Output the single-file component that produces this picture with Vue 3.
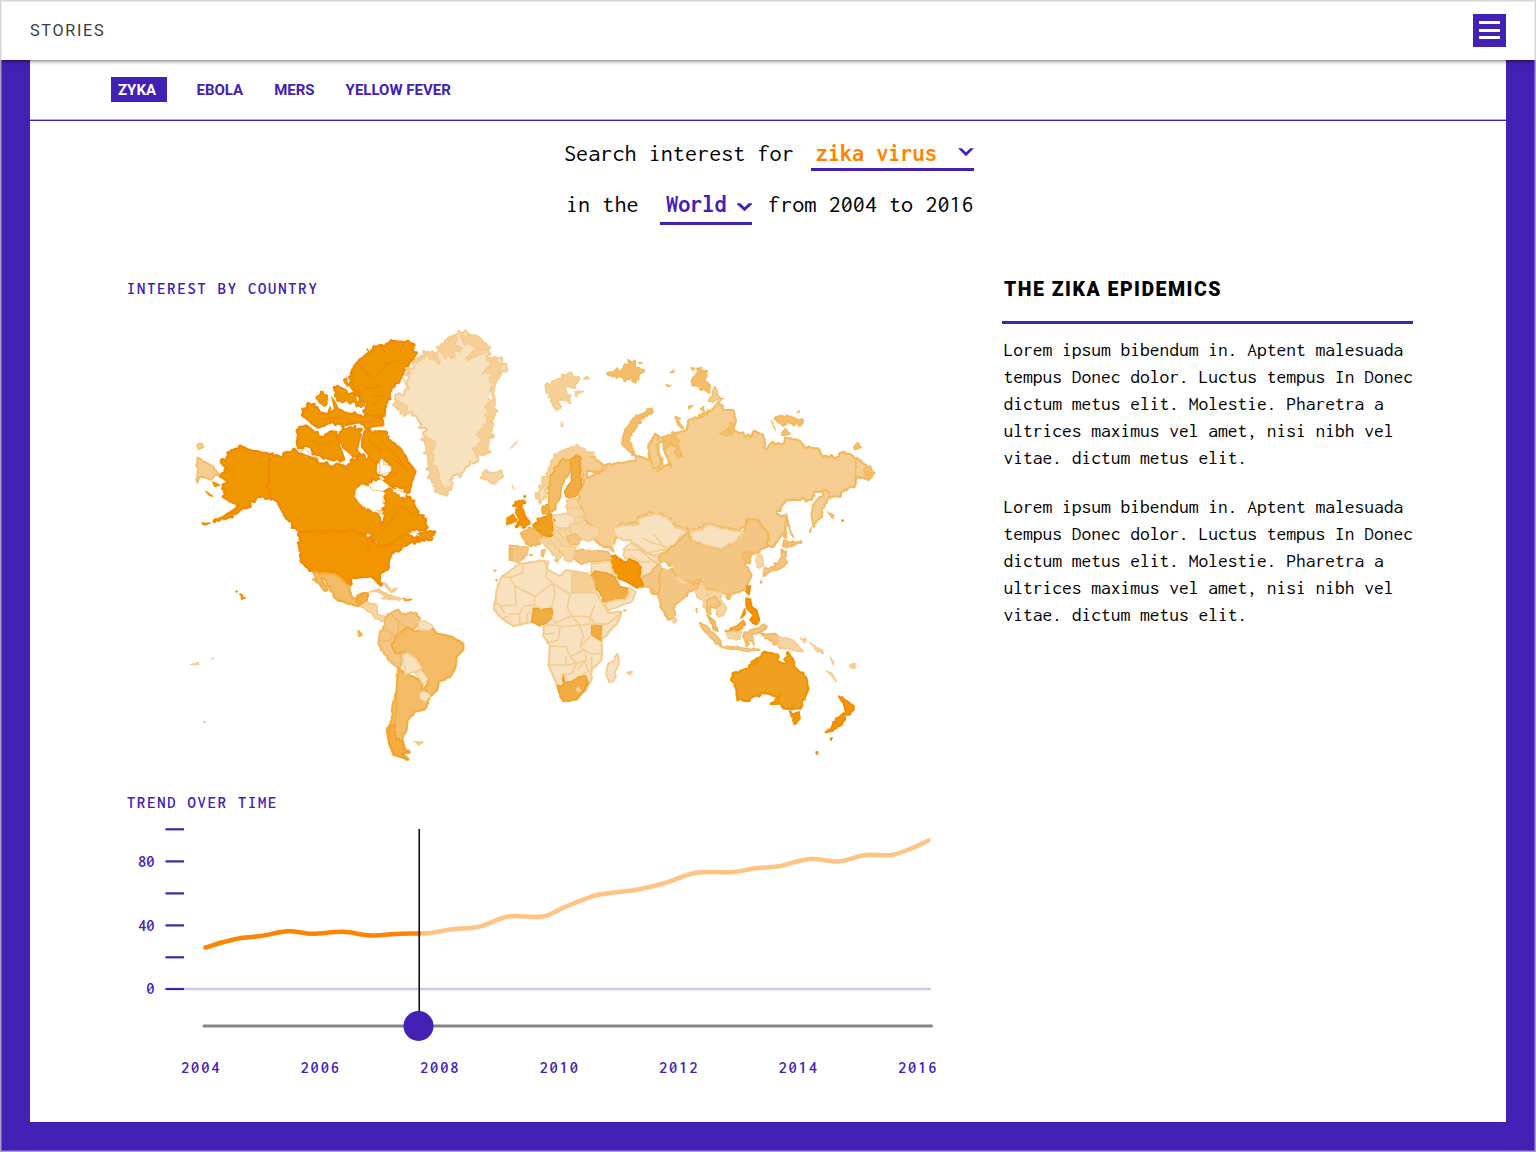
<script setup>
const topics = ['ZYKA', 'EBOLA', 'MERS', 'YELLOW FEVER']

const story = [
  'Lorem ipsum bibendum in. Aptent malesuada',
  'tempus Donec dolor. Luctus tempus In Donec',
  'dictum metus elit. Molestie. Pharetra a',
  'ultrices maximus vel amet, nisi nibh vel',
  'vitae. dictum metus elit.',
]

// Interest tones, from highest to lowest: [fill, border]
const tones = {
  a: ['#ef9700', '#f08a00'],
  u: ['#f29500', '#f08a00'],
  b: ['#f0a020', '#f09200'],
  c: ['#f2ad42', '#f1a12a'],
  d: ['#f3bb66', '#f2ad40'],
  e: ['#f4c684', '#f3b862'],
  r: ['#f5cd90', '#f3b95f'],
  s: ['#f3bd6a', '#f3b95f'],
  f: ['#f6d5a2', '#f5cb8c'],
  g: ['#f8e1be', '#f5cc8f'],
  h: ['#f5cf95', '#f5cc8f'],
  w: ['#ffffff', '#ffffff'],
  v: ['#ffffff', '#f08a00'],
}

// Map sheets: top left corner of each, outlines are in thirds of a pixel
const sheets = {
  W: [185, 325], S: [185, 510], G: [380, 325], R: [620, 350],
  E: [480, 490], N: [520, 430], O: [660, 540],
}

// sheet, tone, coast roughness, outline
const lands = [
  // Alaska, Canada
  ['W', 'a', 4, '108,405 125,397 140,375 168,362 190,374 225,381 250,386 254,392 254,515 235,513 215,518 210,530 195,535 188,548 170,552 160,562 135,575 100,588 85,592 120,572 150,552 165,540 140,532 112,515 125,505 112,480 130,470 103,452 128,435 108,412'],
  ['W', 'a', 4, '250,386 275,399 300,382 318,382 325,370 345,388 370,388 395,402 400,415 430,418 438,432 455,416 472,420 485,428 500,402 520,408 522,388 540,400 555,395 575,410 572,440 590,460 560,470 540,478 520,490 510,515 525,540 560,560 580,568 592,600 598,575 590,555 603,535 597,500 620,485 640,500 655,522 675,515 690,545 722,590 722,618 700,612 665,618 690,630 735,618 752,620 740,645 700,650 660,650 625,672 580,670 560,640 505,622 345,622 330,608 300,575 285,545 275,528 254,515'],
  ['W', 'a', 4, '540,318 604,320 615,345 640,365 660,390 668,410 692,438 680,470 674,502 650,490 612,478 596,465 620,440 618,420 595,402 580,412 560,404 545,382 530,365 532,340'],
  ['W', 'a', 3, '343,305 365,302 385,318 410,335 440,318 455,320 455,345 470,380 478,405 440,405 410,395 385,385 378,368 362,362 340,370 335,350'],
  ['W', 'a', 4, '465,320 498,305 532,312 525,340 516,375 532,395 500,390 478,372 462,345'],
  ['W', 'a', 4, '522,105 545,88 580,62 630,48 680,55 692,90 660,135 640,175 620,190 608,225 600,250 597,275 560,272 540,265 545,240 520,215 500,190 492,155 510,120'],
  ['W', 'a', 4, '350,270 365,240 390,236 405,262 430,268 455,252 490,266 540,272 590,275 595,300 550,308 520,292 480,300 440,292 400,308 375,290'],
  ['W', 'a', 3, '392,218 415,200 428,212 425,240 405,235'],
  ['W', 'a', 3, '445,185 470,188 495,205 512,215 515,232 490,230 470,232 450,215'],
  ['W', 'a', 3, '512,232 530,228 540,240 528,248 514,246'],
  ['W', 'a', 2, '475,165 485,158 488,185'],
  ['W', 'a', 2, '440,215 462,252 448,250'],
  ['W', 'a', 2, '428,262 436,245 440,262'],
  ['W', 'v', 4, '583,412 590,400 604,418 620,425 618,440 600,446 592,466 580,456 586,432'],
  ['W', 'v', 3, '508,516 514,492 530,478 556,484 560,494 596,500 600,545 582,562 560,556 528,540'],
  ['W', 'v', 2, '610,482 640,496 664,502 660,520 645,516'],
  ['W', 'v', 3, '345,384 358,370 380,388 400,400 375,394'],
  ['W', 'a', 2, '592,548 602,544 600,560 590,560'],
  ['W', 'a', 1, '50,594 76,594 56,600'],
  ['W', 'a', 2, '82,470 105,480 90,485'],
  ['W', 'a', 1, '62,498 84,514 74,512'],
  ['W', 'r', 2, '37,397 60,410 85,425 100,445 78,465 45,455 37,475'],
  ['W', 'r', 1, '37,357 51,355 57,366 39,374'],
  // USA and Hawaii
  ['S', 'u', 3, '345,65 505,63 545,75 575,105 600,108 625,98 655,72 700,85 660,108 640,125 620,130 612,150 610,178 585,190 587,228 572,212 560,200 540,200 500,205 493,232 470,205 450,190 410,190 385,185 362,170 345,140 342,110'],
  ['S', 'v', 1, '542,74 552,71 558,78 548,81'],
  ['S', 'v', 1, '571,94 576,96 574,103'],
  ['S', 'v', 2, '582,2 596,2 590,14'],
  ['S', 'v', 2, '672,68 690,66 704,76 690,82'],
  ['S', 'a', 1, '152,245 156,242 157,247'],
  ['S', 'a', 2, '163,252 172,254 182,264 170,268'],
  // Central America
  ['S', 'd', 2, '385,187 410,190 450,192 470,207 493,232 495,255 510,268 530,250 550,250 545,272 520,288 490,282 450,265 440,245 415,204 408,205 428,240 420,243 402,220 382,208 396,210'],
  ['S', 'c', 1, '530,252 550,252 546,272 522,284 512,272'],
  ['S', 'f', 2, '525,288 545,276 577,290 577,314 605,320 600,333 572,328 557,306'],
  ['S', 'h', 2, '553,246 580,238 605,252 622,258 600,258 576,244'],
  ['S', 'h', 2, '588,266 625,258 652,266 640,272 610,268'],
  ['S', 'c', 1, '652,265 682,268 660,273'],
  ['S', 'h', 1, '594,217 606,225 618,242 638,234 620,248 604,232'],
  ['S', 'd', 1, '520,360 532,374 522,380'],
  ['S', 'h', 1, '15,464 40,457 42,464'],
  ['S', 'h', 1, '80,445 86,444 84,448'],
  ['S', 'h', 1, '55,635 62,635 59,639'],
  // South America
  ['S', 'e', 2, '600,322 620,308 640,298 650,312 690,308 705,325 700,345 680,360 650,372 630,400 625,420 650,432 648,468 640,474 610,450 580,402 585,365 600,348'],
  ['S', 'd', 2, '640,472 655,490 700,505 712,528 705,560 735,565 720,598 690,605 668,630 665,660 650,690 655,715 675,728 650,730 672,748 625,735 612,700 606,662 620,630 622,590 635,540'],
  ['S', 'd', 1, '640,370 668,352 690,365 715,355 740,350 755,370 800,380 835,400 835,420 815,440 812,470 798,498 762,515 757,540 738,558 715,540 730,515 710,480 700,450 660,428 632,430 620,408'],
  ['S', 'g', 1, '652,434 668,428 695,448 712,475 700,482 660,494'],
  ['S', 'g', 1, '690,488 712,482 728,508 715,522 700,502'],
  ['S', 'g', 1, '705,548 718,542 736,558 722,575 706,566'],
  ['S', 'g', 1, '698,335 720,332 745,348 735,360 700,360'],
  ['S', 'c', 4, '612,650 630,640 634,690 655,700 652,718 674,728 650,730 670,747 628,735 612,700'],
  ['S', 'h', 2, '686,695 715,695 702,706'],
  // Greenland and the north Atlantic
  ['G', 'g', 6, '178,75 185,55 210,35 250,24 290,32 310,50 325,75 318,95 350,98 380,118 350,165 340,200 345,240 340,300 325,345 320,385 290,410 260,425 245,445 220,450 215,490 200,512 165,500 150,450 145,400 135,340 125,300 110,275 85,265 70,275 50,250 45,210 85,190 75,150 105,105 145,80 170,85'],
  ['G', 'h', 5, '180,75 190,55 212,38 232,42 225,60 245,66 240,82 222,74 214,100 204,84 196,104'],
  ['G', 'h', 4, '240,28 286,32 306,50 322,72 290,86 262,106 268,88 292,70 272,60 252,58'],
  ['G', 'h', 4, '105,108 145,82 172,88 178,118 160,96 150,104 138,92 120,108'],
  ['G', 'h', 4, '322,98 350,98 350,110 366,122 350,160 330,172 338,142 312,146 330,120'],
  ['G', 'h', 5, '334,180 345,240 340,300 325,345 320,385 290,392 278,372 305,345 288,328 320,300 322,240'],
  ['G', 'h', 6, '130,330 165,350 160,400 175,440 185,485 208,486 200,512 165,500 150,450 145,400'],
  ['G', 'w', 2, '328,210 334,206 336,222 330,222'],
  ['G', 'h', 4, '50,225 80,240 85,262 70,275 50,250'],
  ['G', 'f', 5, '300,456 312,440 340,444 365,435 370,455 340,478 315,466'],
  ['G', 'h', 5, '495,180 520,168 545,158 565,145 598,165 575,188 555,185 560,205 575,235 550,225 545,215 530,258 512,228 500,205'],
  ['G', 'h', 2, '585,198 612,200 592,208 588,218'],
  ['G', 'h', 1, '610,162 620,154 630,160 618,164'],
  ['G', 'h', 1, '545,290 549,304 543,304'],
  ['G', 'h', 1, '390,370 412,348 398,366'],
  ['G', 'h', 1, '396,478 404,492 399,490'],
  // Russia
  ['R', 'r', 3, '-120,315 -105,308 -70,330 -48,345 -60,370 -100,362 -98,385 -75,372 -45,358 -35,342 10,338 45,332 55,318 88,330 85,290 105,250 118,260 115,300 128,345 110,365 140,345 155,350 135,310 125,270 165,250 200,240 205,210 250,195 275,180 295,155 310,180 340,180 348,210 340,240 360,250 395,262 405,243 430,255 438,298 455,277 490,283 495,262 540,272 555,293 595,295 605,315 650,322 660,308 690,312 720,330 765,368 745,392 712,380 703,412 670,425 655,440 625,438 605,425 585,425 570,450 500,450 470,490 500,500 495,540 460,590 440,592 445,550 410,510 385,507 375,530 350,540 300,530 265,520 245,535 205,540 165,525 140,500 100,488 55,500 50,520 0,525 -20,532 -5,552 -15,580 -15,605 -60,585 -85,560 -60,540 -110,510 -110,485 -125,460 -125,425 -110,400 -120,350'],
  ['R', 's', 5, '125,262 165,250 172,280 188,320 172,312 164,290 150,280 135,300'],
  ['R', 'r', 4, '87,292 105,252 120,262 112,300 122,345 100,356 92,325'],
  ['R', 's', 4, '298,250 325,235 338,218 343,242 320,258'],
  ['R', 's', 3, '235,192 268,186 258,196 240,204'],
  ['R', 's', 3, '735,355 762,368 745,388 735,378'],
  ['R', 'r', 3, '620,415 600,440 578,465 574,500 580,532 600,505 620,460 628,438'],
  ['R', 's', 3, '95,174 100,187 62,212 44,240 26,272 48,318 26,302 5,282 14,240 40,205 70,190'],
  ['R', 's', 5, '215,90 245,50 262,78 252,90 270,105 268,130 240,110 215,105'],
  ['R', 'r', 3, '285,110 300,145 312,146 265,155 276,130'],
  ['R', 's', 4, '468,200 500,195 550,215 545,223 510,220 490,228 472,215'],
  ['R', 's', 2, '495,235 512,252 485,258'],
  ['R', 's', 1, '455,210 467,242 460,228'],
  ['R', 's', 1, '530,188 538,180 537,188'],
  ['R', 's', 2, '700,292 710,278 725,292 705,300'],
  ['R', 's', 6, '-40,70 -15,62 0,66 12,46 45,30 46,52 74,62 58,74 36,94 22,86 4,82 -10,72 -22,80'],
  ['R', 's', 1, '55,37 68,38 60,42'],
  ['R', 's', 1, '148,68 163,60 160,68'],
  ['R', 's', 1, '138,103 154,106 142,110'],
  ['R', 's', 1, '212,53 226,54 219,62'],
  ['R', 's', 1, '205,168 220,166 207,177'],
  ['R', 's', 2, '240,178 252,168 254,182'],
  ['R', 's', 1, '165,200 182,206 172,212 192,238 178,228 168,208'],
  ['R', 's', 2, '500,490 506,520 522,565 512,550 503,520'],
  ['R', 's', 1, '622,485 642,496 638,506'],
  ['R', 'a', 1, '664,510 671,510 668,514'],
  ['R', 's', 1, '568,548 574,530 572,545'],
  // Middle and east Asia
  ['E', 'g', 2, '400,115 430,105 475,105 480,85 525,70 560,82 585,110 600,115 636,128 600,140 590,158 580,180 545,180 500,190 450,150 425,150 405,135'],
  ['E', 'g', 2, '430,178 455,155 495,182 520,196 560,182 575,195 520,215 540,222 510,250 484,260 475,220 455,210 435,205'],
  ['E', 'w', 2, '400,165 420,150 426,158 413,178 430,206 415,203 405,185'],
  ['R', 'g', 2, '205,545 245,540 265,523 300,535 350,543 372,545 345,575 300,598 250,585 215,570'],
  ['O', 'e', 2, '85,-25 95,0 130,15 180,28 225,5 252,-26 265,-63 290,-60 325,-20 320,20 285,40 255,50 262,65 255,75 275,105 262,135 240,155 205,165 170,152 140,145 120,118 95,130 45,110 10,85 -5,50 30,25 60,0'],
  ['O', 'g', 2, '90,-28 125,-30 145,-47 180,-35 230,-27 252,-25 225,5 180,26 130,13 98,0'],
  ['O', 's', 4, '246,45 272,36 285,40 262,52 272,62 256,72'],
  ['O', 'f', 2, '40,105 92,130 80,138 45,122'],
  ['E', 'e', 2, '535,250 550,215 568,222 580,245 590,265 640,285 662,270 650,300 625,305 615,320 585,345 580,385 565,390 545,355 535,315 515,310 510,290 540,285'],
  ['E', 'e', 1, '480,290 485,262 510,252 535,220 552,222 535,265 540,285 535,315 510,292'],
  ['E', 'g', 1, '582,262 592,262 634,284 610,282'],
  ['E', 'h', 2, '580,376 592,392 582,400'],
  ['E', 'w', 2, '540,222 558,220 562,230 578,232 560,238'],
  ['E', 'u', 3, '388,200 405,195 430,215 455,210 475,220 482,245 478,260 490,286 465,290 440,275 415,265 400,245 388,220'],
  ['E', 'g', 2, '335,220 390,212 400,245 410,262 375,248 345,242 332,248'],
  ['E', 'c', 2, '330,258 345,243 375,250 405,262 420,290 445,295 440,325 400,330 375,337 350,300 330,268'],
  ['E', 'g', 1, '375,340 405,330 440,327 450,295 468,305 455,335 385,362'],
  ['E', 'e', 2, '282,185 305,178 345,180 385,186 395,208 340,215 300,220 285,208'],
  // Africa
  ['E', 'g', 1, '88,245 115,222 190,212 205,215 200,238 240,258 260,240 320,250 335,265 345,300 370,345 385,368 425,365 415,395 365,450 365,510 335,540 335,568 320,595 290,628 250,635 235,600 225,570 205,525 210,470 190,435 192,405 160,395 100,408 65,385 42,360 50,300 65,260'],
  ['E', 'h', 0, '278,248 325,250 340,306 278,308'],
  ['E', 'c', 2, '160,355 188,358 215,355 217,375 200,398 180,408 155,395'],
  ['E', 'c', 1, '335,405 365,407 362,452 335,435'],
  ['E', 'c', 2, '232,585 248,590 248,552 254,578 275,575 300,558 317,558 325,580 310,605 290,628 250,635 238,610'],
  ['E', 'f', 1, '288,598 296,592 303,600 294,606'],
  ['E', 'g', 2, '412,490 418,512 403,570 385,577 378,550 385,520 402,512'],
  ['E', 'h', 1, '440,546 458,545 448,555'],
  ['E', 's', 1, '430,360 440,360 434,364'],
  ['E', 's', 1, '40,240 48,241 44,246'],
  ['E', 's', 1, '46,270 54,268 50,274'],
  // Europe
  ['N', 'h', 4, '45,190 60,165 85,120 95,90 120,65 165,48 190,55 222,75 180,80 150,85 120,90 100,130 85,160 80,200 60,222 48,205'],
  ['N', 'g', 1, '56,182 72,170 76,195 62,212'],
  ['N', 'd', 2, '85,235 88,160 105,110 130,85 155,95 148,130 125,165 122,200 105,240 93,245'],
  ['N', 'c', 2, '152,92 170,75 182,85 180,130 186,170 165,200 138,200 136,180 155,150'],
  ['N', 'f', 3, '142,208 170,203 178,228 190,250 190,275 165,278 148,255 138,232'],
  ['N', 'g', 1, '97,258 140,250 165,262 160,290 130,296 100,290'],
  ['N', 'f', 2, '148,285 180,277 240,295 235,318 205,335 170,320 150,312'],
  ['N', 'f', 2, '92,300 150,296 155,312 172,335 165,362 155,395 140,392 125,368 105,350 88,325'],
  ['N', 'e', 1, '140,318 165,312 185,330 175,345 148,340'],
  ['N', 'b', 4, '38,285 60,266 95,252 98,290 96,318 66,318 52,300'],
  ['N', 'd', 3, '0,308 40,292 68,318 62,342 35,350 18,342'],
  ['N', 'c', 3, '65,235 85,225 92,250 68,252'],
  ['E', 'e', 1, '88,165 145,172 142,195 118,216 88,212'],
  ['E', 's', 0, '88,175 98,175 95,210 88,212'],
  ['E', 'u', 5, '105,35 130,30 125,50 135,75 150,100 130,115 105,110 120,90 108,70'],
  ['E', 'u', 4, '80,85 100,72 108,95 80,105'],
  ['E', 'a', 1, '130,18 138,17 135,24'],
  ['E', 'f', 3, '180,148 205,143 215,162 248,195 232,212 225,195 200,172'],
  ['E', 's', 2, '185,180 196,178 192,202 184,198'],
  ['E', 's', 2, '220,210 234,210 230,218'],
  ['E', 'w', 2, '298,172 300,155 325,160 330,152 345,160 362,178 330,178'],
  ['E', 's', 1, '148,194 158,194 154,198'],
  // South east Asia, Japan
  ['O', 'f', 3, '108,160 125,128 145,160 150,190 140,215 128,180 112,172'],
  ['O', 'f', 3, '150,152 185,155 182,180 200,205 190,225 175,232 170,205 150,185'],
  ['O', 'e', 2, '140,180 165,170 182,192 165,205 150,200 152,225 140,210'],
  ['O', 'd', 2, '140,222 165,245 175,275 160,268'],
  ['O', 's', 2, '196,168 214,166 204,180'],
  ['O', 'e', 3, '118,248 140,258 180,300 185,318 160,300 130,270'],
  ['O', 'e', 2, '175,318 220,320 300,330 270,335 200,326'],
  ['O', 'c', 3, '194,272 230,258 250,240 256,255 240,275 210,275'],
  ['O', 'f', 2, '198,277 245,274 240,298 205,295'],
  ['O', 'e', 3, '252,278 270,270 300,262 312,252 318,266 298,278 275,284 282,316 266,300 262,322 254,300'],
  ['O', 'e', 3, '300,278 318,284 345,280 360,292 360,325 340,306 316,296'],
  ['O', 'f', 3, '350,288 400,300 430,336 405,332 385,325 360,328'],
  ['O', 'h', 2, '420,292 440,300 430,310'],
  ['O', 'h', 2, '448,306 468,320 488,330 490,342 470,334'],
  ['O', 'h', 1, '510,350 522,368 520,376'],
  ['O', 'h', 1, '498,392 516,400 530,425 515,408'],
  ['O', 'h', 3, '568,376 578,370 590,372 584,386 572,384'],
  ['O', 'e', 2, '108,206 112,206 111,220'],
  ['O', 'u', 1, '262,137 272,137 267,165 257,155'],
  ['O', 'u', 2, '258,175 272,178 275,200 290,210 298,240 290,255 270,240 280,225 260,205'],
  ['O', 'u', 1, '254,205 256,222 242,236'],
  ['O', 'f', 3, '285,40 305,42 311,72 298,85 288,68'],
  ['O', 'e', 4, '310,110 312,92 335,80 352,72 366,48 364,28 380,32 378,60 372,80 350,90 330,94'],
  ['O', 's', 3, '366,20 372,-2 392,8 426,2 400,18 380,24'],
  ['O', 's', 1, '370,-10 376,-50 381,-5'],
  ['O', 's', 1, '300,130 304,120 306,128'],
  // Oceania
  ['O', 'b', 3, '217,400 240,392 270,385 275,365 300,352 312,335 355,345 355,365 375,372 382,335 400,360 408,385 440,415 445,445 425,500 395,508 370,505 360,490 330,492 348,484 345,468 320,460 285,468 260,482 232,482 230,450 218,425'],
  ['O', 'u', 2, '388,512 402,520 418,515 420,538 402,553'],
  ['O', 'u', 2, '535,467 565,485 583,500 570,525 555,525 555,510 550,490'],
  ['O', 'u', 2, '552,518 556,540 545,555 520,572 495,578 515,560 520,545'],
  ['O', 'u', 1, '510,596 517,592 513,602'],
  ['O', 'a', 1, '467,636 474,635 472,644'],
]

// Inner borders: sheet, colour, polyline
const borders = [
  ['E', 'g', '90,262 62,262 M90,262 128,250 130,222 M88,262 105,288 165,320 218,280 198,262 200,238 M192,213 205,238 M105,288 108,345 60,348 M45,335 60,348 75,370 M165,320 163,345 130,348 118,372 85,372 M218,280 270,312 275,308 275,250 M218,280 225,310 215,352 M270,312 262,352 275,378 225,400 215,375 M275,308 345,308 M262,352 275,378 330,380 345,345 M330,380 345,402 385,400 425,368 M345,402 335,405 M365,407 385,400 M330,380 330,402 300,405 275,378 M192,405 225,405 240,410 235,450 200,460 M240,410 300,405 310,440 300,470 312,480 270,500 258,470 210,468 M300,470 335,435 M312,480 335,492 365,490 M258,500 258,525 205,525 M270,500 290,520 320,510 315,485 M258,525 290,520 275,550 248,555 M290,540 315,515 325,545 300,558 M325,545 335,540 335,500 M65,385 88,378 M118,372 120,400 M140,400 142,370 155,368 M188,358 163,345 M195,432 225,430'],
  ['S', 'e', '600,360 640,378 M585,390 612,392 635,370 M655,312 M632,322 650,345 668,352 M640,372 640,340 622,315'],
  ['S', 'd', '640,474 636,540 634,600 626,650 626,700 650,725'],
  ['O', 'f', '-20,-20 10,20 30,20 M-50,-5 -20,10 20,20'],
  ['E', 'f', '430,180 480,180 520,215 M455,160 500,190 530,200 M450,195 480,215 510,215'],
  ['N', 'f', '97,258 102,290 130,296 M110,300 150,345 M95,305 130,350 M165,262 190,262 M140,232 175,235 M118,345 155,350 M135,300 140,320'],
  ['W', 'a', '540,108 520,120 560,155 545,150 M575,150 620,110 596,118 M540,190 590,185 570,178 M600,120 650,100 M560,210 600,215 M545,70 560,95 M590,62 600,82 M625,50 632,70 M655,55 645,80 M600,470 640,440 M620,400 660,430 M600,360 640,400 670,440 M545,340 590,380 M480,290 560,290 M420,280 470,280 M640,540 690,570 M590,620 640,560 M380,345 400,360 440,350 M345,385 375,395 400,410 M495,165 525,215 520,180 M560,240 590,225'],
  ['R', 's', '708,325 706,410'],
  ['S', 'u', '575,115 630,95 M548,85 550,120 M560,100 566,90'],
  ['O', 'b', '290,352 280,375 300,362 M345,485 360,460 355,492 M390,508 405,492'],
  ['G', 'h', '150,85 165,110 M300,40 322,80 262,105 M345,100 305,150 M215,100 230,70 M85,195 70,160'],
]

// Fixed pseudo-random offset in -1..1 for a point
const jitter = (x, y) => {
  const s = Math.sin(x * 12.9898 + y * 78.233) * 43758.5453
  return (s - Math.floor(s)) * 2 - 1
}

function coast(text, rough) {
  const pts = text.split(' ').map((p) => p.split(',').map(Number))
  const out = []
  pts.forEach(([x, y], i) => {
    const [nx, ny] = pts[(i + 1) % pts.length]
    const len = Math.hypot(nx - x, ny - y)
    const steps = Math.max(1, Math.round(len / 6))
    out.push([x, y])
    for (let k = 1; k < steps; k++) {
      const t = k / steps
      const px = x + (nx - x) * t
      const py = y + (ny - y) * t
      const j = jitter(px, py)
      const o = rough * j * (Math.abs(j) > 0.8 ? 2 : 0.5)
      out.push([px - ((ny - y) / len) * o, py + ((nx - x) / len) * o])
    }
  })
  return 'M' + out.map((p) => p.map((v) => v.toFixed(1)).join(',')).join('L') + 'Z'
}

const place = (key) => `translate(${sheets[key][0]} ${sheets[key][1]}) scale(.33333)`

const shapes = lands.map(([sheet, tone, rough, outline]) => ({
  at: place(sheet),
  d: coast(outline, rough),
  fill: tones[tone][0],
  stroke: tones[tone][1],
  w: tone === 'w' || tone === 'v' ? 1.5 : outline.length > 120 ? 6.5 : outline.length > 40 ? 5 : 3.5,
}))

const lines = borders.map(([sheet, tone, d]) => ({ at: place(sheet), d: 'M' + d, stroke: tones[tone][1] }))

// Trend chart
const past = [[205.5, 947.5], [222, 942.5], [241, 938], [261, 936], [288, 931.3], [312, 933.8], [343, 931.8], [371, 935.5], [395, 934], [419, 933.4]]
const future = [[419, 933.4], [430, 933], [450, 929.6], [480, 926.5], [508, 916.5], [543, 916.5], [565, 907], [597, 895], [635, 890], [665, 883], [695, 873], [733, 872], [757, 868], [777, 866.5], [810, 859], [839, 861.5], [865, 855], [892, 855], [910, 849], [928.5, 840.5]]

function smooth(p) {
  let d = `M${p[0]}`
  for (let i = 0; i < p.length - 1; i++) {
    const a = p[i - 1] || p[i]
    const b = p[i]
    const c = p[i + 1]
    const e = p[i + 2] || c
    const h = (c[0] - b[0]) / 3
    const slope = (m, n) => (n[0] === m[0] ? 0 : (n[1] - m[1]) / (n[0] - m[0]))
    d += `C${b[0] + h},${b[1] + h * slope(a, c)} ${c[0] - h},${c[1] - h * slope(b, e)} ${c}`
  }
  return d
}

const ticks = [829.3, 861.4, 893.4, 925.4, 957.3, 989]
const levels = [['80', 867], ['40', 931], ['0', 994]]
const years = [2004, 2006, 2008, 2010, 2012, 2014, 2016]
</script>

<template>
  <div class="page">
    <header class="topbar">
      <span class="brand">STORIES</span>
      <button class="menu" aria-label="Menu"><i></i><i></i><i></i></button>
    </header>

    <main class="panel">
      <nav class="topics">
        <a v-for="(t, i) in topics" :key="t" :class="['topic', { active: i === 0 }]">{{ t }}</a>
      </nav>

      <section class="query">
        <div class="row first">
          <span>Search interest for</span>
          <span class="select term"><b>zika virus</b>
            <svg width="16" height="9" viewBox="0 0 16 9"><path d="M0 .3H3.600L8 4.200 12.400 .3H16L8 8.300Z" /></svg>
          </span>
        </div>
        <div class="row second">
          <span>in the</span>
          <span class="select place"><b>World</b>
            <svg width="15" height="9" viewBox="0 0 15 9"><path d="M0 .3H3.300L7.500 4.200 11.700 .3H15V1.300L7.500 8.300 0 1.300Z" /></svg>
          </span>
          <span class="range">from 2004 to 2016</span>
        </div>
      </section>

      <div class="columns">
        <div class="data">
          <h2 class="label">INTEREST BY COUNTRY</h2>
          <svg class="map" width="710" height="445" viewBox="185 325 710 445">
            <path v-for="(s, i) in shapes" :key="i" :d="s.d" :transform="s.at" :fill="s.fill" :stroke="s.stroke" :stroke-width="s.w" stroke-linejoin="bevel" />
            <path v-for="(l, i) in lines" :key="'l' + i" :d="l.d" :transform="l.at" :stroke="l.stroke" fill="none" stroke-width="4.500" stroke-linejoin="round" />
          </svg>

          <h2 class="label trend">TREND OVER TIME</h2>
          <svg class="chart" width="823" height="265" viewBox="127 820 823 265">
            <line x1="184" x2="931" y1="989" y2="989" stroke="#cfc8ea" stroke-width="2.300" />
            <line v-for="y in ticks" :key="y" x1="165.500" x2="184" :y1="y" :y2="y" stroke="#4320b4" stroke-width="2.200" />
            <text v-for="l in levels" :key="l[0]" x="154.500" :y="l[1]" text-anchor="end" class="level">{{ l[0] }}</text>
            <path :d="smooth(future)" class="curve" stroke="#ffc384" />
            <path :d="smooth(past)" class="curve" stroke="#ff8400" />
            <line x1="204" x2="931.500" y1="1026" y2="1026" stroke="#868686" stroke-width="3" stroke-linecap="round" />
            <line x1="419.200" x2="419.200" y1="829" y2="1012" stroke="#000" stroke-width="1.500" />
            <circle cx="418.500" cy="1026" r="15" fill="#4320b4" />
            <text v-for="(y, i) in years" :key="y" :x="181 + i * 119.500" y="1073" class="year">{{ y }}</text>
          </svg>
        </div>

        <article class="story">
          <h1>THE ZIKA EPIDEMICS</h1>
          <p v-for="n in 2" :key="n"><span v-for="line in story" :key="line">{{ line }}</span></p>
        </article>
      </div>
    </main>
    <div class="edge"></div>
  </div>
</template>

<style>
body { margin: 0; }
</style>

<style scoped>
.page {
  position: relative;
  width: 1536px;
  height: 1152px;
  overflow: hidden;
  box-sizing: border-box;
  background: #4320b4;
  font-family: Inconsolata, "DejaVu Sans Mono", monospace;
}
.edge {
  position: absolute;
  z-index: 2;
  inset: 0;
  border: 1px solid rgba(200, 200, 200, 0.75);
  box-shadow: inset 0 0 0 1px rgba(200, 200, 200, 0.35);
  pointer-events: none;
}
.topbar {
  position: relative;
  z-index: 1;
  display: flex;
  align-items: center;
  justify-content: space-between;
  height: 60px;
  padding: 0 30px;
  box-sizing: border-box;
  background: #fff;
  box-shadow: 0 1px 4px rgba(0, 0, 0, 0.6);
}
.brand {
  font: 400 16.200px Roboto, sans-serif;
  letter-spacing: 1.700px;
  color: #3b3b3b;
}
.menu {
  display: flex;
  flex-direction: column;
  align-items: center;
  justify-content: center;
  gap: 4.500px;
  width: 33px;
  height: 33px;
  padding: 0;
  border: 0;
  background: #4320b4;
}
.menu i { width: 21px; height: 3px; background: #fff; }
.panel {
  display: flex;
  flex-direction: column;
  height: 1062px;
  margin: 0 30px;
  background: #fff;
}
.topics {
  display: flex;
  align-items: center;
  height: 61px;
  padding: 0 0 0 81px;
  box-sizing: border-box;
  border-bottom: 1px solid #4320b4;
  box-shadow: inset 0 -1px rgba(67, 32, 180, 0.4);
  font: 700 15px Roboto, sans-serif;
  color: #4320b4;
}
.topic { margin-right: 31px; line-height: 26px; white-space: nowrap; }
.topic.active {
  width: 55.500px;
  height: 25px;
  margin: 0 30px 1px 0;
  padding-left: 7px;
  box-sizing: border-box;
  background: #4320b4;
  color: #fff;
}
.query { height: 149px; font-size: 24.200px; white-space: pre; }
.row { display: flex; align-items: flex-start; line-height: 30px; }
.first { padding: 17px 0 0 534px; }
.second { padding: 18px 0 0 536px; }
.select {
  display: flex;
  justify-content: space-between;
  align-items: flex-start;
  box-sizing: border-box;
  border-bottom: 3px solid #4320b4;
}
.select svg { fill: #4320b4; }
.term { width: 163px; height: 33px; margin-left: 17px; padding-left: 5px; color: #ff8400; }
.term svg { margin-top: 10px; }
.place { width: 92px; height: 36px; margin-left: 21.500px; padding-left: 6px; color: #4320b4; }
.place svg { margin-top: 14px; }
.range { margin-left: 16px; }
.columns { display: flex; }
.data { width: 875px; padding-left: 97px; box-sizing: border-box; }
.label {
  height: 20px;
  margin: 9px 0 0;
  font-size: 16.500px;
  font-weight: 600;
  line-height: 20px;
  letter-spacing: 1.830px;
  color: #4320b4;
}
.trend { margin: 23px 0 0; }
.map { display: block; margin: 26px 0 0 58px; }
.chart { display: block; margin-top: 7px; }
.curve { fill: none; stroke-width: 4.500; stroke-linecap: round; }
.level, .year { fill: #4320b4; font-weight: 600; }
.level { font-size: 16.500px; }
.year { font-size: 16.500px; letter-spacing: 1.830px; }
.story { width: 410.500px; margin-left: 97px; }
h1 {
  height: 54px;
  margin: 0;
  box-sizing: border-box;
  padding: 8px 0 0 2px;
  border-bottom: 3px solid #4320b4;
  font: 900 19.500px/24px Roboto, sans-serif;
  letter-spacing: 1.480px;
  white-space: nowrap;
}
.story p {
  display: flex;
  flex-direction: column;
  margin: 12px 0 22px 1.500px;
  font-size: 19.500px;
  line-height: 27px;
  white-space: nowrap;
}
.story p + p { margin-top: 0; }
</style>
